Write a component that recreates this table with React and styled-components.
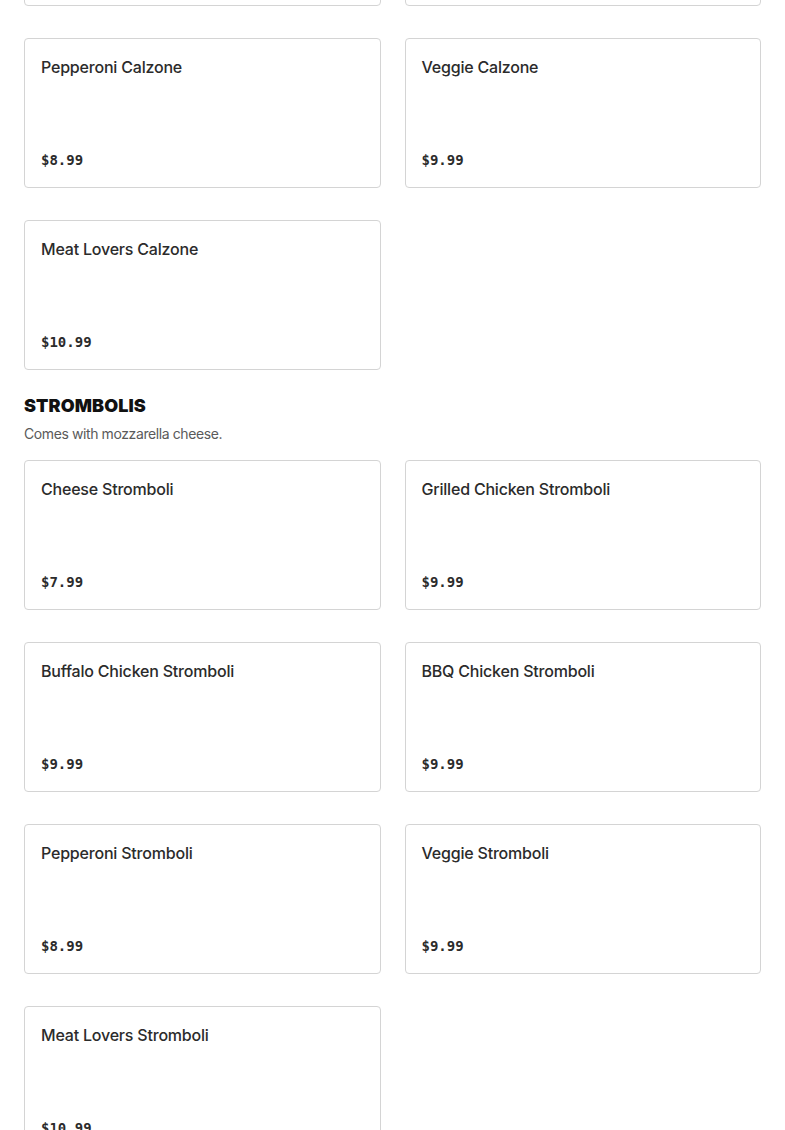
import React from "react";
import styled, { createGlobalStyle } from "styled-components";

const GlobalStyle = createGlobalStyle`
  body {
    margin: 0;
    background: #ffffff;
    font-family: Inter, "Liberation Sans", sans-serif;
    overflow: hidden;
  }
`;

const Page = styled.div`
  padding: 0 24px;
  margin-top: -144px;
`;

const Section = styled.section`
  margin-bottom: 24px;
`;

const SectionTitle = styled.h2`
  margin: 0 0 6px;
  font-size: 18px;
  line-height: 24px;
  font-weight: 900;
  color: #111111;
  text-transform: uppercase;
  letter-spacing: 0.1px;
`;

const SectionNote = styled.p`
  margin: 0 0 16px;
  font-size: 14px;
  line-height: 20px;
  color: #5a5a5a;
  letter-spacing: -0.4px;
`;

const Grid = styled.div`
  display: grid;
  grid-template-columns: 1fr 1fr;
  column-gap: 24px;
  row-gap: 32px;
`;

const Card = styled.div`
  box-sizing: border-box;
  height: 150px;
  border: 1px solid #d4d4d4;
  border-radius: 4px;
  padding: 16px 16px 17px;
  display: flex;
  flex-direction: column;
  justify-content: space-between;
`;

const ItemName = styled.div`
  font-size: 16px;
  line-height: 24px;
  font-weight: 500;
  color: #2b2b2b;
  letter-spacing: -0.2px;
`;

const Price = styled.div`
  font-family: "DejaVu Sans Mono", "Liberation Mono", monospace;
  font-size: 14px;
  line-height: 20px;
  font-weight: 700;
  color: #2b2b2b;
`;

const calzones = [
  { name: "Buffalo Chicken Calzone", price: "$9.99" },
  { name: "BBQ Chicken Calzone", price: "$9.99" },
  { name: "Pepperoni Calzone", price: "$8.99" },
  { name: "Veggie Calzone", price: "$9.99" },
  { name: "Meat Lovers Calzone", price: "$10.99" },
];

const strombolis = [
  { name: "Cheese Stromboli", price: "$7.99" },
  { name: "Grilled Chicken Stromboli", price: "$9.99" },
  { name: "Buffalo Chicken Stromboli", price: "$9.99" },
  { name: "BBQ Chicken Stromboli", price: "$9.99" },
  { name: "Pepperoni Stromboli", price: "$8.99" },
  { name: "Veggie Stromboli", price: "$9.99" },
  { name: "Meat Lovers Stromboli", price: "$10.99" },
];

function ItemGrid({ items }) {
  return (
    <Grid>
      {items.map((item) => (
        <Card key={item.name}>
          <ItemName>{item.name}</ItemName>
          <Price>{item.price}</Price>
        </Card>
      ))}
    </Grid>
  );
}

export default function App() {
  return (
    <>
      <GlobalStyle />
      <Page>
        <Section>
          <ItemGrid items={calzones} />
        </Section>
        <Section>
          <SectionTitle>Strombolis</SectionTitle>
          <SectionNote>Comes with mozzarella cheese.</SectionNote>
          <ItemGrid items={strombolis} />
        </Section>
      </Page>
    </>
  );
}
